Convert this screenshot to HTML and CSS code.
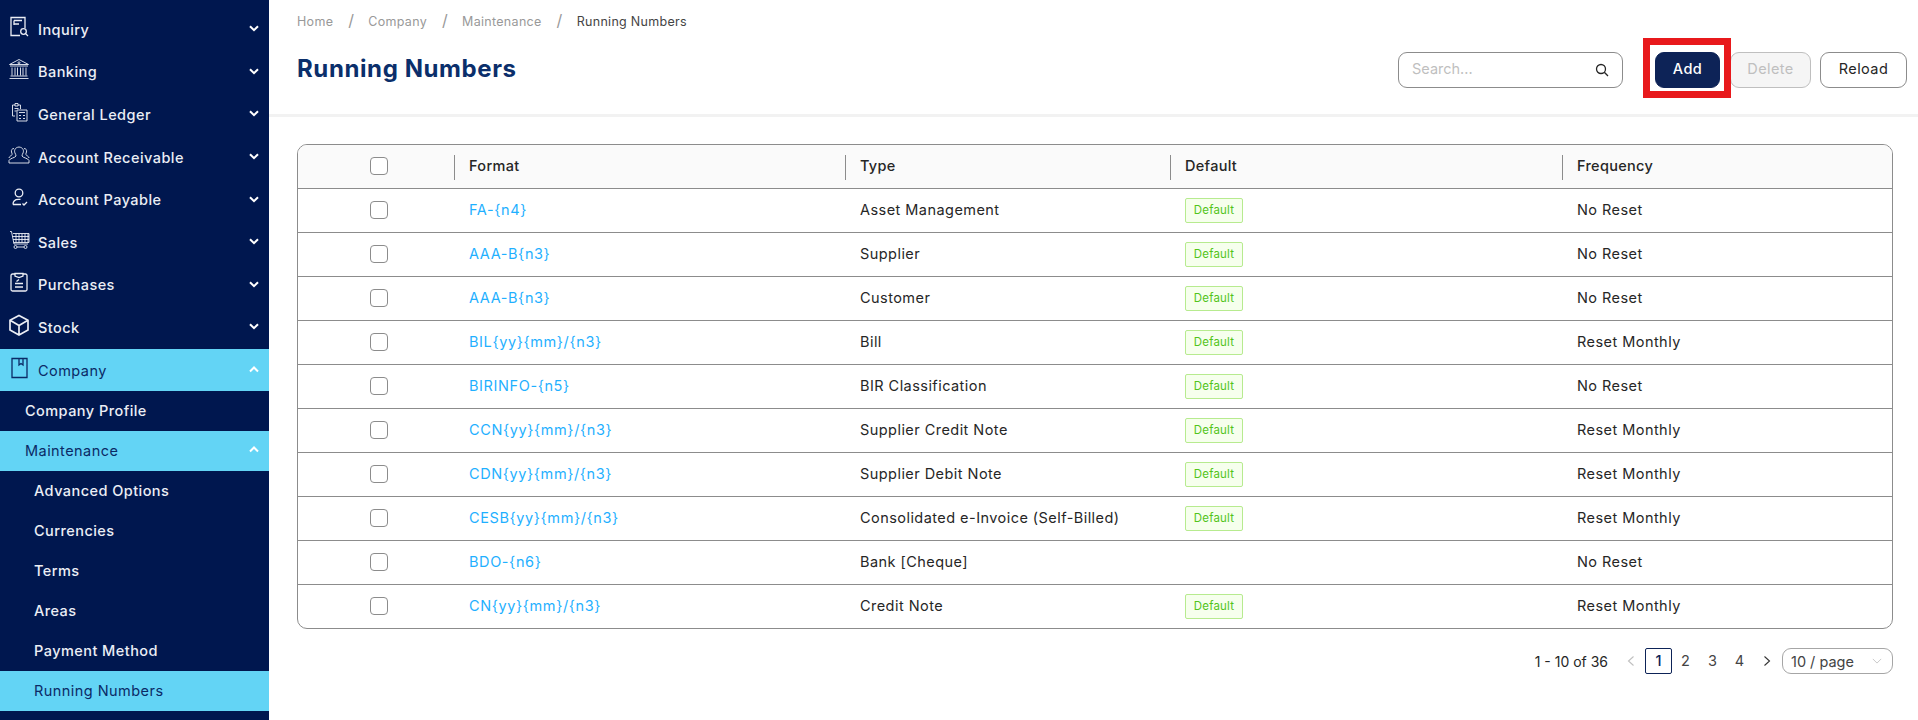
FILE: index.html
```html
<!DOCTYPE html>
<html lang="en">
<head>
<meta charset="utf-8">
<title>Running Numbers</title>
<link rel="stylesheet" href="styles.css">
</head>
<body>
<div class="app">
  <nav class="sidebar">
    <div class="nav-item"><svg class="nav-icon" viewBox="0 0 22 22"><path d="M17 12V1.500H3v18h9M6 4.500h8M6 4.500V9M6 8h5"/><circle cx="15.500" cy="15.500" r="2.800"/><path d="M17.600 17.600 20 20"/></svg><span class="nav-label">Inquiry</span><svg class="chev" viewBox="0 0 10 7"><path d="M1 1.200 5 5.200 9 1.200"/></svg></div>
    <div class="nav-item"><svg class="nav-icon thin" viewBox="0 0 22 22"><path d="M1.500 6.500 11 1.500l9.500 5zM2 8h18M4 9.500v8M7 9.500v8M9.500 9.500v8M12.500 9.500v8M15 9.500v8M18 9.500v8M2.500 18h17M1.500 20.500h19"/><circle cx="11" cy="4.800" r="1"/></svg><span class="nav-label">Banking</span><svg class="chev" viewBox="0 0 10 7"><path d="M1 1.200 5 5.200 9 1.200"/></svg></div>
    <div class="nav-item"><svg class="nav-icon thin" viewBox="0 0 22 22"><path d="M7 15H4.500V4H7M10 4h2.500v4M7 2.500h3V5H7zM6.500 7.500h4M6.500 10h2M9 9h10v11H9zM11 11.500h6M11 14.500h2M15 14.500h2M11 17.500h2M15 17.500h2"/></svg><span class="nav-label">General Ledger</span><svg class="chev" viewBox="0 0 10 7"><path d="M1 1.200 5 5.200 9 1.200"/></svg></div>
    <div class="nav-item"><svg class="nav-icon thin" viewBox="0 0 22 22"><path d="M7 9c-1-2-.5-5.500 4-6 4.500.5 5 4 4 6-.5 1-1 2-1 3 1 2 6 2 7 4.500V19H1v-2.500C2 14 7 14 8 12c0-1-.5-2-1-3zM6 4.500C4 4.500 3 6 3.500 8c.2 1 .7 1.500.7 2.500C3 12 1 12.500 1 14M16 4.500c2 0 3 1.500 2.500 3.500-.2 1-.7 1.500-.7 2.500 1.200 1.500 3.200 2 3.200 3.500"/></svg><span class="nav-label">Account Receivable</span><svg class="chev" viewBox="0 0 10 7"><path d="M1 1.200 5 5.200 9 1.200"/></svg></div>
    <div class="nav-item"><svg class="nav-icon" viewBox="0 0 22 22"><circle cx="11" cy="7" r="3.800"/><path d="M5 18.500c0-3.500 2-5.200 5.500-5.200h2M5 18.500h8M14.500 17.500l1.500 1.500 3-3"/></svg><span class="nav-label">Account Payable</span><svg class="chev" viewBox="0 0 10 7"><path d="M1 1.200 5 5.200 9 1.200"/></svg></div>
    <div class="nav-item"><svg class="nav-icon thin" viewBox="0 0 22 22"><path d="M2 2.500h1.500L6 15h14M5 4.500h16v9H5.600M4.500 7.500H21M5 10.500h16M8 4.500v9M11 4.500v9M14 4.500v9M17 4.500v9M20 4.500v9"/><circle cx="7.500" cy="18" r="1.500"/><circle cx="17.500" cy="18" r="1.500"/><path d="M9 18h7"/></svg><span class="nav-label">Sales</span><svg class="chev" viewBox="0 0 10 7"><path d="M1 1.200 5 5.200 9 1.200"/></svg></div>
    <div class="nav-item"><svg class="nav-icon" viewBox="0 0 22 22"><path d="M7 3H4.500A1.500 1.500 0 0 0 3 4.500v14A1.500 1.500 0 0 0 4.500 20h13a1.500 1.500 0 0 0 1.500-1.500v-14A1.500 1.500 0 0 0 17.500 3H15M7 2.500h8v2.500L11 6.500 7 5zM7 12.500h8M7 16h8M8.500 10.500 11 8.500"/></svg><span class="nav-label">Purchases</span><svg class="chev" viewBox="0 0 10 7"><path d="M1 1.200 5 5.200 9 1.200"/></svg></div>
    <div class="nav-item"><svg class="nav-icon bold" viewBox="0 0 22 22"><path d="M11 1.500 20 6.300V16L11 21 2 16V6.300zM2.500 6.500 11 11.500l8.500-5M11 11.500V20.500"/></svg><span class="nav-label">Stock</span><svg class="chev" viewBox="0 0 10 7"><path d="M1 1.200 5 5.200 9 1.200"/></svg></div>
    <div class="nav-item is-active"><svg class="nav-icon" viewBox="0 0 22 22"><path d="M4 1.500h15v19H4zM11 1.500v6.500l2-1.500 2 1.500V1.500"/></svg><span class="nav-label">Company</span><svg class="chev" viewBox="0 0 10 7"><path d="M1 5.500 5 1.500 9 5.500"/></svg></div>
    <div class="sub-item">Company Profile</div>
    <div class="sub-item is-active"><span class="nav-label">Maintenance</span><svg class="chev" viewBox="0 0 10 7"><path d="M1 5.500 5 1.500 9 5.500"/></svg></div>
    <div class="sub-item deep">Advanced Options</div>
    <div class="sub-item deep">Currencies</div>
    <div class="sub-item deep">Terms</div>
    <div class="sub-item deep">Areas</div>
    <div class="sub-item deep">Payment Method</div>
    <div class="sub-item deep is-active">Running Numbers</div>
  </nav>
  <main class="main">
    <header class="page-header">
      <div class="crumbs">
        <span>Home</span><i>/</i><span>Company</span><i>/</i><span>Maintenance</span><i>/</i><span class="current">Running Numbers</span>
      </div>
      <div class="title-row">
        <h1 class="title">Running Numbers</h1>
        <div class="actions">
          <div class="search"><span class="placeholder">Search...</span><svg class="search-icon" viewBox="0 0 14 14"><circle cx="6" cy="6" r="4.500"/><path d="M9.300 9.300 13 13"/></svg></div>
          <div class="add-wrap"><button class="btn primary">Add</button><span class="highlight"></span></div>
          <button class="btn disabled">Delete</button>
          <button class="btn">Reload</button>
        </div>
      </div>
    </header>
    <section class="content">
      <div class="table-wrap">
        <table class="table">
          <colgroup><col class="c1"><col class="c2"><col class="c3"><col class="c4"><col></colgroup>
          <thead>
            <tr><th class="check-cell"><span class="check"></span></th><th class="sep">Format</th><th class="sep">Type</th><th class="sep">Default</th><th class="sep">Frequency</th></tr>
          </thead>
          <tbody>
            <tr><td class="check-cell"><span class="check"></span></td><td><a class="link">FA-{n4}</a></td><td>Asset Management</td><td class="tag-cell"><span class="tag">Default</span></td><td>No Reset</td></tr>
            <tr><td class="check-cell"><span class="check"></span></td><td><a class="link">AAA-B{n3}</a></td><td>Supplier</td><td class="tag-cell"><span class="tag">Default</span></td><td>No Reset</td></tr>
            <tr><td class="check-cell"><span class="check"></span></td><td><a class="link">AAA-B{n3}</a></td><td>Customer</td><td class="tag-cell"><span class="tag">Default</span></td><td>No Reset</td></tr>
            <tr><td class="check-cell"><span class="check"></span></td><td><a class="link">BIL{yy}{mm}/{n3}</a></td><td>Bill</td><td class="tag-cell"><span class="tag">Default</span></td><td>Reset Monthly</td></tr>
            <tr><td class="check-cell"><span class="check"></span></td><td><a class="link">BIRINFO-{n5}</a></td><td>BIR Classification</td><td class="tag-cell"><span class="tag">Default</span></td><td>No Reset</td></tr>
            <tr><td class="check-cell"><span class="check"></span></td><td><a class="link">CCN{yy}{mm}/{n3}</a></td><td>Supplier Credit Note</td><td class="tag-cell"><span class="tag">Default</span></td><td>Reset Monthly</td></tr>
            <tr><td class="check-cell"><span class="check"></span></td><td><a class="link">CDN{yy}{mm}/{n3}</a></td><td>Supplier Debit Note</td><td class="tag-cell"><span class="tag">Default</span></td><td>Reset Monthly</td></tr>
            <tr><td class="check-cell"><span class="check"></span></td><td><a class="link">CESB{yy}{mm}/{n3}</a></td><td>Consolidated e-Invoice (Self-Billed)</td><td class="tag-cell"><span class="tag">Default</span></td><td>Reset Monthly</td></tr>
            <tr><td class="check-cell"><span class="check"></span></td><td><a class="link">BDO-{n6}</a></td><td>Bank [Cheque]</td><td class="tag-cell"></td><td>No Reset</td></tr>
            <tr><td class="check-cell"><span class="check"></span></td><td><a class="link">CN{yy}{mm}/{n3}</a></td><td>Credit Note</td><td class="tag-cell"><span class="tag">Default</span></td><td>Reset Monthly</td></tr>
          </tbody>
        </table>
      </div>
      <div class="pagination">
        <span class="total">1 - 10 of 36</span>
        <svg class="pg-arrow prev" viewBox="0 0 10 12"><path d="M7.500 1.500 2.500 6l5 4.500"/></svg>
        <span class="page current">1</span><span class="page">2</span><span class="page">3</span><span class="page">4</span>
        <svg class="pg-arrow next" viewBox="0 0 10 12"><path d="M2.500 1.500 7.500 6l-5 4.500"/></svg>
        <div class="size"><span>10 / page</span><svg class="size-chev" viewBox="0 0 12 7"><path d="M1 1l5 5 5-5"/></svg></div>
      </div>
    </section>
  </main>
</div>
</body>
</html>
```
FILE: styles.css
```css
* { box-sizing: border-box; }
html, body { margin: 0; height: 720px; overflow: hidden; }
body { font-family: Inter, "Noto Sans", "Liberation Sans", sans-serif; font-size: 14px; color: #262626; background: #fff; }
.app { display: flex; height: 720px; }

.sidebar { width: 269px; flex: none; height: 720px; overflow: hidden; background: #00174f; color: #ebeef5; padding-top: 8px; font-weight: 500; letter-spacing: .45px; }
.nav-item { display: flex; align-items: center; height: 42.600px; padding: 0 10px 0 8px; font-size: 14.500px; }
.nav-icon { width: 22px; height: 22px; flex: none; margin: 0 8px 5px 0; fill: none; stroke: currentColor; stroke-width: 1.300; }
.nav-icon.thin { stroke-width: .9; }
.nav-icon.bold { stroke-width: 1.700; }
.nav-label { flex: 1; }
.chev { width: 10px; height: 7px; flex: none; margin-bottom: 1px; fill: none; stroke: #fff; stroke-width: 2; }
.sub-item { display: flex; align-items: center; height: 40px; padding: 0 10px 2px 25px; font-size: 14.500px; }
.sub-item.deep { padding-left: 34px; }
.is-active { background: #63d4f5; color: #0b2a66; font-weight: 400; }

.main { flex: 1; min-width: 0; }
.page-header { height: 117px; padding: 0 11px 0 28px; border-bottom: 3px solid #f2f2f2; }
.crumbs { height: 42px; display: flex; align-items: center; font-size: 12.500px; letter-spacing: .3px; color: #999; }
.crumbs i { font-style: normal; font-size: 16px; margin: 0 14px 3px 15px; color: #999; }
.crumbs .current { color: #444; }
.title-row { height: 54px; display: flex; align-items: center; justify-content: space-between; }
.title { margin: 0; font-size: 24px; line-height: 30px; font-weight: 700; color: #0b2f6b; letter-spacing: .6px; }
.actions { display: flex; align-items: center; margin-top: 1px; }
.search { width: 225px; height: 36px; display: flex; align-items: center; justify-content: space-between; padding: 0 13px 3px; border: 1px solid #8c8c8c; border-radius: 9px; margin-right: 32px; }
.placeholder { color: #bfbfbf; font-size: 14.500px; }
.search-icon { width: 14px; height: 14px; margin-top: 3px; fill: none; stroke: #262626; stroke-width: 1.300; }
.add-wrap { position: relative; display: flex; margin-right: 10px; }
.highlight { position: absolute; left: -12px; top: -14px; width: 88px; height: 60px; border: 7.500px solid #e8191c; pointer-events: none; }
.btn { height: 36px; padding: 0 0 2px; border: 1px solid #8c8c8c; border-radius: 9px; background: #fff; color: #262626; font: inherit; font-size: 14.500px; letter-spacing: .4px; width: 87px; margin-left: 9px; }
.add-wrap .btn { margin: 0; }
.btn.primary { width: 65px; background: #0d2357; border-color: #0d2357; color: #fff; font-weight: 500; }
.btn.disabled { width: 81px; margin-left: 0; background: #f5f5f5; border-color: #bfbfbf; color: #bfbfbf; }

.content { padding: 27px 25px 0 28px; }
.table-wrap { border: 1px solid #8c8c8c; border-radius: 10px; overflow: hidden; }
.table { width: 100%; table-layout: fixed; border-collapse: separate; border-spacing: 0; }
.c1 { width: 156px; }
.c2 { width: 391px; }
.c3 { width: 325px; }
.c4 { width: 392px; }
th, td { height: 44px; padding: 0 15px 2px; text-align: left; border-bottom: 1px solid #8c8c8c; font-size: 14.500px; font-weight: 400; letter-spacing: .45px; }
tbody tr:last-child td { height: 43px; border-bottom: 0; }
th { background: #fafafa; font-weight: 500; letter-spacing: .3px; position: relative; color: #262626; }
.sep::before { content: ""; position: absolute; left: 0; top: 10px; height: 25px; width: 1px; background: #8c8c8c; }
th.check-cell, td.check-cell { padding: 0 0 1px 72px; }
td.tag-cell { padding-bottom: 0; }
.check { display: block; width: 18px; height: 18px; border: 1px solid #8c8c8c; border-radius: 4px; background: #fff; }
.link { color: #1fb0ff; letter-spacing: .6px; }
.tag { display: inline-block; width: 58px; height: 25px; line-height: 23px; text-align: center; font-size: 11.500px; letter-spacing: .2px; color: #52c41a; background: #f6ffed; border: 1px solid #b7eb8f; border-radius: 2px; }

.pagination { display: flex; align-items: center; justify-content: flex-end; height: 26px; margin-top: 19px; font-size: 14.500px; }
.total { margin-right: 14px; font-size: 14px; }
.pg-arrow { width: 10px; height: 12px; fill: none; stroke: #333; stroke-width: 1.100; }
.pg-arrow.prev { stroke: #bfbfbf; margin: 0 9px 0 4px; }
.pg-arrow.next { margin: 0 10px 0 9px; }
.page { width: 27px; height: 26px; line-height: 24px; text-align: center; border: 1px solid transparent; border-radius: 2px; color: #444; }
.page.current { color: #0d2357; border-color: #0d2357; font-weight: 500; }
.size { width: 111px; height: 26px; display: flex; align-items: center; justify-content: space-between; padding: 0 10px 0 8px; border: 1px solid #a6a6a6; border-radius: 9px; color: #444; }
.size-chev { width: 10px; height: 6px; fill: none; stroke: #bfbfbf; stroke-width: 1; }
```
